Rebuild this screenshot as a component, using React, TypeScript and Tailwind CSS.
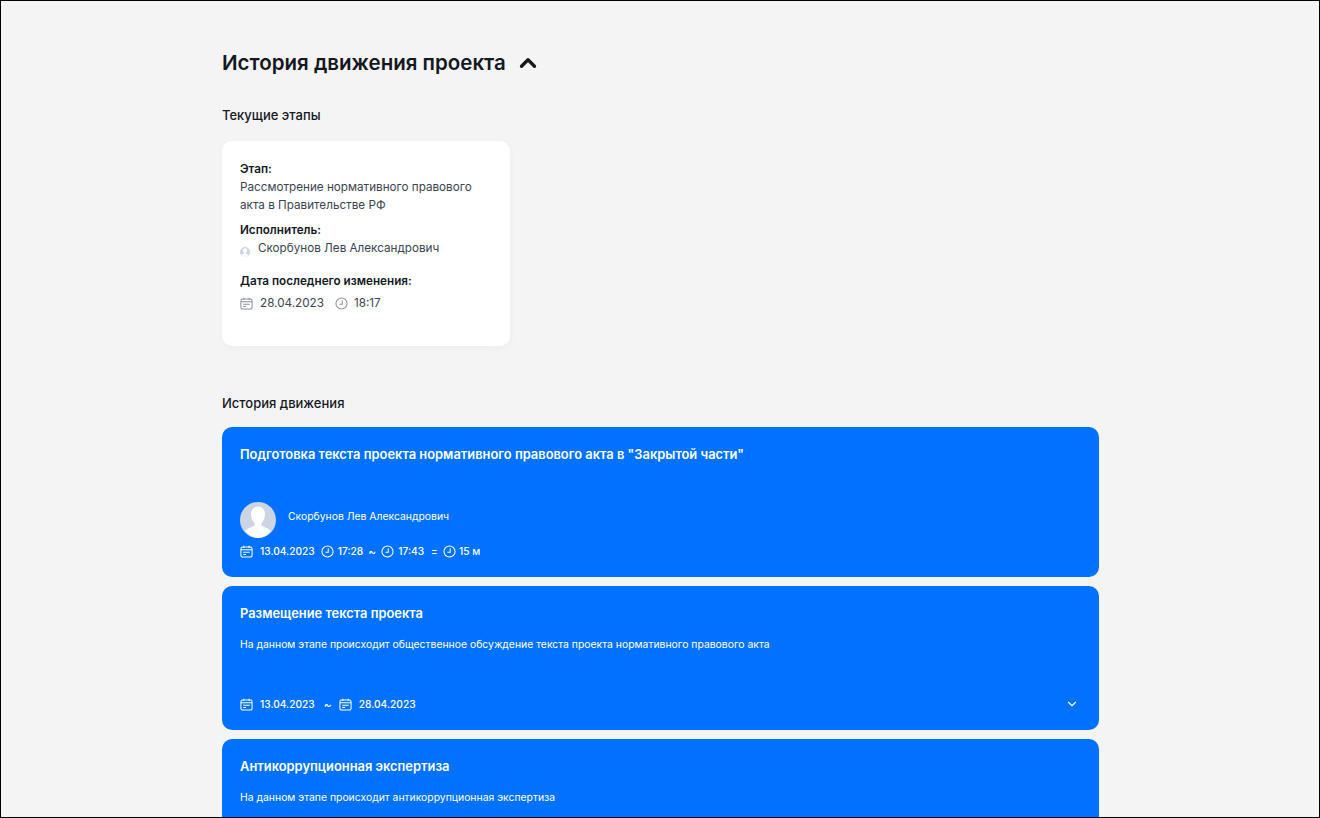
import { ChevronDown, ChevronUp } from 'lucide-react';

function CalendarIcon({ className }: { className: string }) {
  return (
    <svg className={className} viewBox="0 0 14 14" fill="none" stroke="currentColor" strokeWidth="1.1">
      <rect x="1" y="2.2" width="12" height="10.8" rx="1.8" />
      <path d="M1 5.2h12M4.2 .8v2.4M9.800 .8v2.400M3.500 7.800h7M3.500 10.200h3" />
    </svg>
  );
}

function ClockIcon({ className }: { className: string }) {
  return (
    <svg className={className} viewBox="0 0 14 14" fill="none" stroke="currentColor" strokeWidth="1.1">
      <circle cx="7" cy="7" r="6" />
      <path d="M7.800 3.500V7.800H4.800" />
    </svg>
  );
}

function Avatar({ className }: { className: string }) {
  return (
    <svg className={className} viewBox="0 0 36 36">
      <circle cx="18" cy="18" r="18" fill="#cdd5e4" />
      <path d="M18 4.500c-4.500 0-7 3.200-7 7.800 0 3.500 1.400 6.500 3.500 8.700v2.500c-1.500 1.500-7 2.500-9.300 5.500A18 18 0 0 0 18 36a18 18 0 0 0 12.800-7c-2.300-3-7.800-4-9.300-5.500V21c2.100-2.200 3.500-5.200 3.500-8.700 0-4.600-2.500-7.800-7-7.800z" fill="#fff" />
    </svg>
  );
}

export default function App() {
  return (
    <div className="h-[818px] overflow-hidden border border-black bg-[#f4f4f4] font-['Inter',sans-serif] text-[#14181f]">
      <div className="ml-[221px] w-[877px] pt-[47px]">
        <div className="flex h-[30px] items-center">
          <h1 className="text-[20.5px] font-semibold leading-[30px]">История движения проекта</h1>
          <ChevronUp className="ml-[9px] h-[26px] w-[26px]" strokeWidth={3} />
        </div>

        <h2 className="mt-[27px] text-[13px] font-medium leading-[20px]">Текущие этапы</h2>

        {/* current stage */}
        <div className="mt-[16px] h-[205px] w-[288px] rounded-[10px] bg-white px-[18px] pt-[20px] shadow-[0_2px_10px_rgba(0,0,0,0.03)]">
          <div className="text-[11.7px] font-semibold leading-[16px]">Этап:</div>
          <div className="mt-[1px] text-[11.7px] leading-[18px] text-[#3c4452]">
            Рассмотрение нормативного правового<br />акта в Правительстве РФ
          </div>
          <div className="mt-[8px] text-[11.7px] font-semibold leading-[16px]">Исполнитель:</div>
          <div className="mt-[2px] flex h-[18px] items-center text-[11.7px] text-[#3c4452]">
            <Avatar className="mt-[6px] mr-[8px] h-[10px] w-[10px]" />
            Скорбунов Лев Александрович
          </div>
          <div className="mt-[15px] text-[11.7px] font-semibold leading-[16px]">Дата последнего изменения:</div>
          <div className="mt-[5px] flex h-[20px] items-center text-[11.7px] text-[#3c4452]">
            <CalendarIcon className="mb-[2px] mr-[7px] h-[13px] w-[13px] text-[#8a919c]" />
            28.04.2023
            <ClockIcon className="mb-[2px] ml-[11px] mr-[6px] h-[13px] w-[13px] text-[#8a919c]" />
            18:17
          </div>
        </div>

        <h2 className="mt-[47px] text-[13px] font-medium leading-[20px]">История движения</h2>

        <div className="mt-[14px] flex flex-col gap-[9px] text-white">
          <div className="h-[150px] rounded-[10px] bg-[#0072ff] px-[18px] pt-[18px]">
            <div className="text-[12.9px] font-semibold leading-[20px]">
              Подготовка текста проекта нормативного правового акта в "Закрытой части"
            </div>
            <div className="mt-[37px] flex items-center text-[10.4px]">
              <Avatar className="mr-[12px] h-[36px] w-[36px]" />
              <span className="mb-[6px]">Скорбунов Лев Александрович</span>
            </div>
            <div className="mt-[5px] flex h-[18px] items-center text-[10.2px] font-medium">
              <CalendarIcon className="mb-[1px] mr-[7px] h-[13px] w-[13px]" />
              13.04.2023
              <ClockIcon className="mb-[1px] ml-[6px] mr-[4px] h-[13px] w-[13px]" />
              17:28
              <span className="ml-[5px] mr-[5px] text-[12px]">~</span>
              <ClockIcon className="mb-[1px] mr-[4px] h-[13px] w-[13px]" />
              17:43
              <span className="ml-[7px] mr-[5px]">=</span>
              <ClockIcon className="mb-[1px] mr-[3px] h-[13px] w-[13px]" />
              15 м
            </div>
          </div>

          <div className="relative h-[144px] rounded-[10px] bg-[#0072ff] px-[18px] pt-[18px]">
            <div className="text-[12.9px] font-semibold leading-[20px]">Размещение текста проекта</div>
            <div className="mt-[13px] text-[10.4px] leading-[16px]">
              На данном этапе происходит общественное обсуждение текста проекта нормативного правового акта
            </div>
            <div className="mt-[43px] flex h-[18px] items-center text-[10.2px] font-medium">
              <CalendarIcon className="mb-[1px] mr-[7px] h-[13px] w-[13px]" />
              13.04.2023
              <span className="ml-[9px] mr-[7px] text-[12px]">~</span>
              <CalendarIcon className="mb-[1px] mr-[7px] h-[13px] w-[13px]" />
              28.04.2023
            </div>
            <ChevronDown className="absolute right-[20px] bottom-[19px] h-[14px] w-[14px]" strokeWidth={2} />
          </div>

          <div className="h-[144px] rounded-[10px] bg-[#0072ff] px-[18px] pt-[18px]">
            <div className="text-[12.9px] font-semibold leading-[20px]">Антикоррупционная экспертиза</div>
            <div className="mt-[13px] text-[10.4px] leading-[16px]">
              На данном этапе происходит антикоррупционная экспертиза
            </div>
          </div>
        </div>
      </div>
    </div>
  );
}
